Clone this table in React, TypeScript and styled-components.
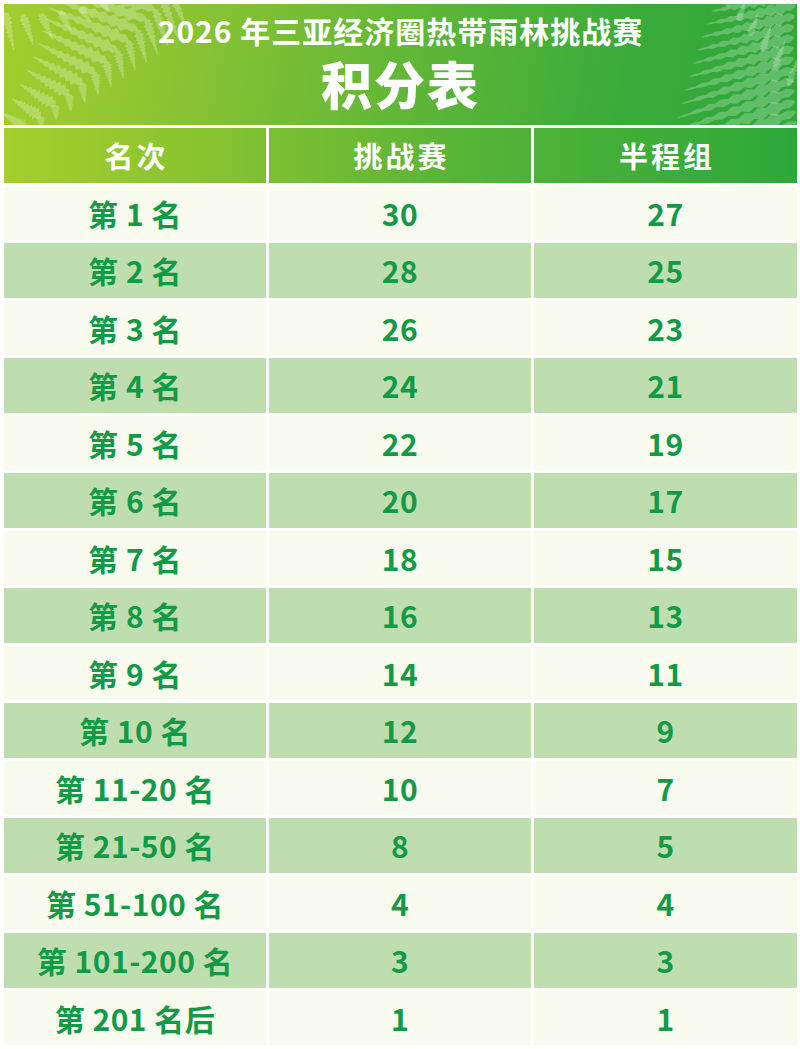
import React from "react";
import styled, { createGlobalStyle } from "styled-components";

const Global = createGlobalStyle`
  html, body { margin: 0; padding: 0; background: #ffffff; }
  * { box-sizing: border-box; }
  body { font-family: "Noto Sans CJK SC", "Noto Sans", sans-serif; }
`;

const TOTAL_W = 793;

const Page = styled.div`
  width: 800px;
  padding: 4px 3px 4px 4px;
  display: flex;
  flex-direction: column;
  gap: 3px;
`;

const Banner = styled.header`
  position: relative;
  overflow: hidden;
  height: 121px;
  background: linear-gradient(100deg, #a3cd2d 0%, #8cc432 22%, #5fb637 52%, #3aab3a 78%, #2ea83b 100%);
  display: flex;
  flex-direction: column;
  align-items: center;
  padding-top: 8px;
`;

const FernLayer = styled.svg<{ $side: "left" | "right" }>`
  position: absolute;
  top: 0;
  ${(p) => (p.$side === "left" ? "left: 0;" : "right: 0;")}
  width: 190px;
  height: 121px;
  pointer-events: none;
`;

const Subtitle = styled.h2`
  position: relative;
  margin: 0;
  font-size: 30px;
  line-height: 36px;
  font-weight: 700;
  letter-spacing: 1px;
  color: #ffffff;
`;

const Title = styled.h1`
  position: relative;
  margin: 6px 0 0;
  font-size: 51px;
  line-height: 58px;
  font-weight: 900;
  letter-spacing: 2px;
  color: #ffffff;
`;

const Grid = styled.div`
  display: grid;
  grid-template-columns: 262px 262px 263px;
  column-gap: 3px;
  row-gap: 3px;
`;

const HeadCell = styled.div<{ $offset: number }>`
  height: 54.5px;
  display: flex;
  align-items: center;
  justify-content: center;
  font-size: 29px;
  font-weight: 700;
  letter-spacing: 3px;
  padding-left: 3px;
  color: #ffffff;
  background: linear-gradient(90deg, #a6ce2b 0%, #82c131 30%, #55b337 60%, #2ca83a 100%);
  background-size: ${TOTAL_W}px 100%;
  background-position: ${(p) => -p.$offset}px 0;
`;

const Cell = styled.div<{ $alt: boolean }>`
  height: 54.5px;
  display: flex;
  align-items: center;
  justify-content: center;
  font-size: 30px;
  font-weight: 700;
  letter-spacing: 0.5px;
  color: #129a46;
  background: ${(p) => (p.$alt ? "#bfdeb0" : "#f8fbee")};
`;

type Pt = [number, number];

function bez(p0: Pt, p1: Pt, p2: Pt, t: number): Pt {
  const u = 1 - t;
  return [u * u * p0[0] + 2 * u * t * p1[0] + t * t * p2[0], u * u * p0[1] + 2 * u * t * p1[1] + t * t * p2[1]];
}
function tan(p0: Pt, p1: Pt, p2: Pt, t: number): Pt {
  return [2 * (1 - t) * (p1[0] - p0[0]) + 2 * t * (p2[0] - p1[0]), 2 * (1 - t) * (p1[1] - p0[1]) + 2 * t * (p2[1] - p1[1])];
}

function pinna(b: Pt, ang: number, len: number, w: number): string {
  const n = 18;
  const dx = Math.cos(ang), dy = Math.sin(ang);
  const nx = -dy, ny = dx;
  const up: Pt[] = [];
  const lo: Pt[] = [];
  for (let i = 0; i <= n; i++) {
    const t = i / n;
    const hw = w * Math.pow(1 - t, 0.7) * Math.min(1, t * 5 + 0.3) * (i % 2 ? 1 : 0.5);
    const cx = b[0] + dx * len * t, cy = b[1] + dy * len * t;
    up.push([cx + nx * hw, cy + ny * hw]);
    lo.push([cx - nx * hw, cy - ny * hw]);
  }
  const pts = [...up, ...lo.reverse()];
  return "M" + pts.map((p) => p[0].toFixed(1) + " " + p[1].toFixed(1)).join("L") + "Z";
}

function frond(p0: Pt, p1: Pt, p2: Pt, n: number, maxLen: number, w: number, sides: number[], spread: number, taper = 0.85): string[] {
  const out: string[] = [];
  for (let k = 0; k < n; k++) {
    const t = k / n;
    const p = bez(p0, p1, p2, t);
    const tg = tan(p0, p1, p2, t);
    const a = Math.atan2(tg[1], tg[0]);
    const len = maxLen * (1 - t * taper);
    for (const s of sides) {
      out.push(pinna(p, a + s * spread, len, w));
    }
  }
  return out;
}

const leftPaths = [
  ...frond([165, -15], [120, 55], [5, 135], 14, 125, 8, [1], 1.2),
  ...frond([165, -15], [120, 55], [5, 135], 14, 45, 6, [-1], 1.0),
  ...frond([-15, 5], [40, 20], [120, -10], 7, 45, 6, [1], 1.2),
];

const rightPaths = [
  ...frond([192, 140], [182, 60], [190, -20], 15, 150, 8, [-1], 1.85, 0.45),
  ...frond([210, 120], [150, 40], [110, -10], 8, 40, 5, [1], 1.0, 0.6),
];

const Fern: React.FC<{ side: "left" | "right"; paths: string[]; opacity: number }> = ({ side, paths, opacity }) => (
  <FernLayer $side={side} viewBox="0 0 190 121" preserveAspectRatio="none">
    <g fill="#ffffff" fillOpacity={opacity}>
      {paths.map((d, i) => (
        <path key={i} d={d} />
      ))}
    </g>
  </FernLayer>
);

const rows: [string, string, string][] = [
  ["第 1 名", "30", "27"],
  ["第 2 名", "28", "25"],
  ["第 3 名", "26", "23"],
  ["第 4 名", "24", "21"],
  ["第 5 名", "22", "19"],
  ["第 6 名", "20", "17"],
  ["第 7 名", "18", "15"],
  ["第 8 名", "16", "13"],
  ["第 9 名", "14", "11"],
  ["第 10 名", "12", "9"],
  ["第 11-20 名", "10", "7"],
  ["第 21-50 名", "8", "5"],
  ["第 51-100 名", "4", "4"],
  ["第 101-200 名", "3", "3"],
  ["第 201 名后", "1", "1"],
];

const heads = [
  { label: "名次", offset: 0 },
  { label: "挑战赛", offset: 265 },
  { label: "半程组", offset: 530 },
];

export default function App() {
  return (
    <>
      <Global />
      <Page>
        <Banner>
          <Fern side="left" paths={leftPaths} opacity={0.26} />
          <Fern side="right" paths={rightPaths} opacity={0.24} />
          <Subtitle>2026 年三亚经济圈热带雨林挑战赛</Subtitle>
          <Title>积分表</Title>
        </Banner>
        <Grid>
          {heads.map((h) => (
            <HeadCell key={h.label} $offset={h.offset}>
              {h.label}
            </HeadCell>
          ))}
          {rows.map((r, i) =>
            r.map((c, j) => (
              <Cell key={i + "-" + j} $alt={i % 2 === 1}>
                {c}
              </Cell>
            ))
          )}
        </Grid>
      </Page>
    </>
  );
}
